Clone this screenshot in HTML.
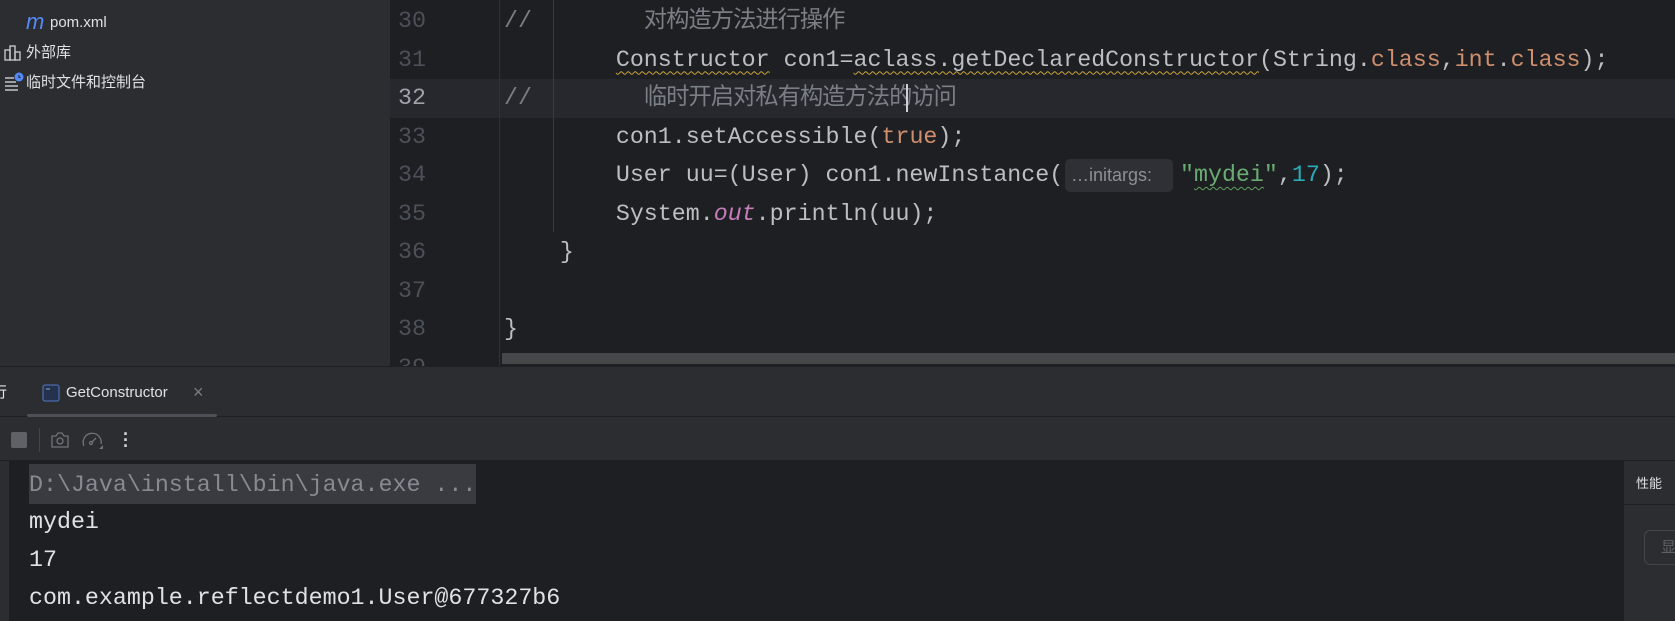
<!DOCTYPE html>
<html><head><meta charset="utf-8"><style>
*{margin:0;padding:0;box-sizing:border-box}
body{width:1675px;height:621px;overflow:hidden;background:#1e1f22;position:relative;font-family:"Liberation Sans","Noto Sans CJK SC",sans-serif}
.abs{position:absolute}
.side{left:0;top:0;width:390px;height:366px;background:#2b2d30}
.st{color:#dfe1e5;font-size:15px;white-space:nowrap;line-height:20px}
.code{font-family:"Liberation Mono","Noto Sans CJK SC",monospace;font-size:23.3px;color:#bcbec4;white-space:pre;line-height:38.5px;height:38.5px}
.ln{font-family:"Liberation Mono",monospace;font-size:23.3px;color:#4b5059;line-height:38.5px;width:50px;text-align:right;left:376px}
.cm{color:#7a7e85}
.cj{letter-spacing:-1px}
.kw{color:#cf8e6d}
.str{color:#6aab73}
.num{color:#2aacb8}
.out{color:#c77dbb;font-style:italic}
.wy{text-decoration:underline wavy #c9a43a;text-underline-offset:5px;text-decoration-thickness:1px}
.wg{text-decoration:underline wavy #5fa05f;text-underline-offset:5px;text-decoration-thickness:1px}
.con{font-family:"Liberation Mono",monospace;font-size:23.3px;color:#dfe1e5;white-space:pre;line-height:37px;left:29px}
</style></head><body>
<div class="abs side"></div>
<div class="abs st" style="left:26px;top:11px;color:#548af7;font-style:italic;font-size:22px;line-height:22px">m</div>
<div class="abs st" style="left:50px;top:13px">pom.xml</div>
<svg class="abs" style="left:4px;top:44px" width="18" height="18" viewBox="0 0 18 18" fill="none" stroke="#ced0d6" stroke-width="1.3"><rect x="1" y="6" width="5" height="10"/><rect x="6" y="2" width="5" height="14"/><rect x="11" y="8" width="5" height="8"/></svg>
<div class="abs st" style="left:26px;top:43px">外部库</div>
<svg class="abs" style="left:4px;top:72px" width="20" height="20" viewBox="0 0 20 20"><g stroke="#ced0d6" stroke-width="1.4"><line x1="1" y1="6" x2="10" y2="6"/><line x1="1" y1="10" x2="12" y2="10"/><line x1="1" y1="14" x2="14" y2="14"/><line x1="1" y1="18" x2="14" y2="18"/></g><circle cx="15" cy="5" r="4.5" fill="#548af7"/><path d="M15 3v2.5h1.5" stroke="#1e1f22" stroke-width="1" fill="none"/></svg>
<div class="abs st" style="left:26px;top:73px">临时文件和控制台</div>

<div class="abs" style="left:390px;top:79px;width:1285px;height:38.5px;background:#26282e"></div>
<div class="abs" style="left:499px;top:0;width:1px;height:366px;background:#2f3136"></div>
<div class="abs" style="left:553px;top:0;width:1px;height:232px;background:#393b40"></div>

<div class="abs ln" style="top:2px">30</div>
<div class="abs ln" style="top:40.5px">31</div>
<div class="abs ln" style="top:79px;color:#a1a3ab">32</div>
<div class="abs ln" style="top:117.5px">33</div>
<div class="abs ln" style="top:156px">34</div>
<div class="abs ln" style="top:194.5px">35</div>
<div class="abs ln" style="top:233px">36</div>
<div class="abs ln" style="top:271.5px">37</div>
<div class="abs ln" style="top:310px">38</div>
<div class="abs ln" style="top:348.5px">39</div>

<div class="abs code" style="left:504px;top:2px"><span class="cm">//        <span class="cj">对构造方法进行操作</span></span></div>
<div class="abs code" style="left:504px;top:40.5px">        <span class="wy">Constructor</span> con1=<span class="wy">aclass.getDeclaredConstructor</span>(String.<span class="kw">class</span>,<span class="kw">int</span>.<span class="kw">class</span>);</div>
<div class="abs code" style="left:504px;top:79px"><span class="cm">//        <span class="cj">临时开启对私有构造方法的访问</span></span></div>
<div class="abs" style="left:906px;top:84px;width:2px;height:28px;background:#ced0d6"></div>
<div class="abs code" style="left:504px;top:117.5px">        con1.setAccessible(<span class="kw">true</span>);</div>
<div class="abs code" style="left:504px;top:156px">        User uu=(User) con1.newInstance(</div>
<div class="abs" style="left:1065px;top:159px;width:108px;height:33px;background:#2f3035;border-radius:5px;color:#8c8f94;font-size:18px;line-height:33px;padding-left:6px;white-space:nowrap">…initargs:</div>
<div class="abs code" style="left:1180px;top:156px"><span class="str">"<span class="wg">mydei</span>"</span>,<span class="num">17</span>);</div>
<div class="abs code" style="left:504px;top:194.5px">        System.<span class="out">out</span>.println(uu);</div>
<div class="abs code" style="left:504px;top:233px">    }</div>
<div class="abs code" style="left:504px;top:310px">}</div>

<div class="abs" style="left:502px;top:353px;width:1173px;height:11px;background:#464749"></div>

<div class="abs" style="left:0;top:366px;width:1675px;height:94px;background:#2b2d30;border-top:1px solid #1e1f22"></div>
<div class="abs" style="left:0;top:416px;width:1675px;height:1px;background:#1e1f22"></div>
<div class="abs st" style="left:-8px;top:383px">行</div>
<svg class="abs" style="left:42px;top:384px" width="18" height="18" viewBox="0 0 18 18"><rect x="1" y="1" width="16" height="16" rx="2" fill="#25324d" stroke="#4a6aa8" stroke-width="1.3"/><line x1="4" y1="5" x2="8" y2="5" stroke="#8ea5d4"/></svg>
<div class="abs st" style="left:66px;top:383px">GetConstructor</div>
<div class="abs st" style="left:193px;top:382px;color:#7a7e85;font-size:18px">×</div>
<div class="abs" style="left:27px;top:414px;width:190px;height:3px;background:#4e5157;border-radius:2px"></div>

<div class="abs" style="left:11px;top:432px;width:16px;height:16px;background:#5f6166;border-radius:2px"></div>
<div class="abs" style="left:39px;top:428px;width:1px;height:24px;background:#43454a"></div>
<svg class="abs" style="left:50px;top:431px" width="20" height="18" viewBox="0 0 20 18" fill="none" stroke="#6f737a" stroke-width="1.3"><path d="M2 5h4l2-3h4l2 3h4v11H2z"/><circle cx="10" cy="10" r="3"/></svg>
<svg class="abs" style="left:82px;top:430px" width="22" height="20" viewBox="0 0 22 20" fill="none" stroke="#6f737a" stroke-width="1.3"><path d="M2 16A9 9 0 1 1 19 14"/><circle cx="9" cy="13" r="1.5"/><path d="M10 12l4-4"/><path d="M17 19h4v-4z" fill="#6f737a" stroke="none"/></svg>
<div class="abs" style="left:123px;top:431px;width:4px;height:20px;color:#ced0d6;font-size:18px;line-height:6px;font-weight:bold">·<br>·<br>·</div>

<div class="abs" style="left:0;top:461px;width:9px;height:160px;background:#2b2d30"></div>
<div class="abs" style="left:29px;top:464px;width:447px;height:40px;background:#393b40"></div>
<div class="abs con" style="top:467px;color:#868a91">D:\Java\install\bin\java.exe ...</div>
<div class="abs con" style="top:504px">mydei</div>
<div class="abs con" style="top:542px">17</div>
<div class="abs con" style="top:580px">com.example.reflectdemo1.User@677327b6</div>

<div class="abs" style="left:1623px;top:461px;width:52px;height:160px;background:#2b2d30;border-left:1px solid #1e1f22"></div>
<div class="abs" style="left:1623px;top:504px;width:52px;height:1px;background:#1e1f22"></div>
<div class="abs st" style="left:1636px;top:474px;font-size:13px">性能</div>
<div class="abs" style="left:1644px;top:530px;width:40px;height:35px;border:1px solid #43454a;border-radius:6px;color:#5f6166;font-size:15px;line-height:33px;padding-left:16px">显</div>
</body></html>
